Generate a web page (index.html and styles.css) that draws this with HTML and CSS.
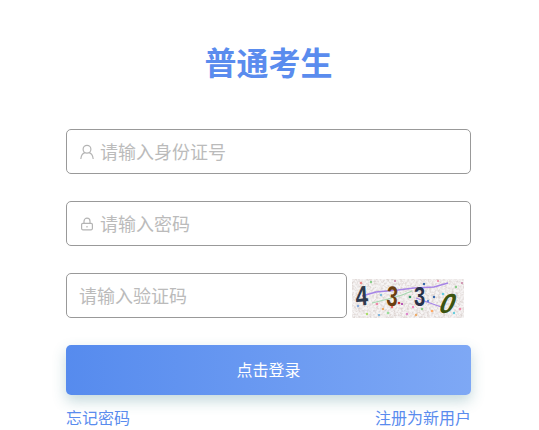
FILE: index.html
```html
<!DOCTYPE html>
<html lang="zh-CN">
<head>
    <meta charset="UTF-8">
    <meta name="viewport" content="width=device-width, initial-scale=1.0">
    <title>普通考生</title>
    <link rel="stylesheet" href="styles.css">
</head>
<body>

<form class="login-form">
    <h1 class="title">普通考生</h1>

    <div class="field">
        <svg class="field-icon" viewBox="0 0 16 16" width="16" height="16" fill="none" stroke="#b4b4b4" stroke-width="1.2">
            <circle cx="8" cy="5.2" r="3.9"/>
            <path d="M1.8 15c.4-3.6 2.6-5.9 4.2-6.3M14.2 15c-.4-3.6-2.6-5.9-4.2-6.3"/>
        </svg>
        <input class="input with-icon" type="text" placeholder="请输入身份证号">
    </div>

    <div class="field">
        <svg class="field-icon" viewBox="0 0 16 16" width="16" height="16" fill="none" stroke="#b4b4b4" stroke-width="1.2">
            <rect x="2.6" y="7.4" width="10.8" height="6.4" rx="1.2"/>
            <path d="M5 7.4V5.2a3 3 0 0 1 6 0v2.2M8 10v1.6"/>
        </svg>
        <input class="input with-icon" type="password" placeholder="请输入密码">
    </div>

    <div class="code-row">
        <input class="input code-input" type="text" placeholder="请输入验证码">
        <svg class="captcha" viewBox="0 0 112 39" width="112" height="39">
            <filter id="speckle" x="0" y="0" width="100%" height="100%">
                <feTurbulence type="fractalNoise" baseFrequency="0.45" numOctaves="2" seed="7"/>
                <feColorMatrix values="0 0 0 0 0.72  0 0 0 0 0.66  0 0 0 0 0.64  2.6 0 0 0 -1"/>
            </filter>
            <rect width="112" height="39" fill="#f6f4f4"/>
            <rect width="112" height="39" filter="url(#speckle)"/>
            <path d="M10 17 24 13 46 11 62 9 82 8 96 4" fill="none" stroke="#a583e6" stroke-width="1.4"/>
            <path d="M20 24 36 20 50 16 60 12" fill="none" stroke="#a8d8b0" stroke-width="1.2"/>
            <path d="M64 19 78 24 92 29" fill="none" stroke="#a583e6" stroke-width="1.2"/>
            <g>
                <circle cx="9" cy="4" r="1.3" fill="#e88"/><circle cx="19" cy="3" r="1.2" fill="#8c8"/>
                <circle cx="6" cy="27" r="1.2" fill="#8ad"/><circle cx="25" cy="25" r="1.3" fill="#e8a"/>
                <circle cx="29" cy="16" r="1.2" fill="#7bd"/><circle cx="31" cy="30" r="1.2" fill="#ea6"/>
                <circle cx="36" cy="34" r="1.3" fill="#9d9"/><circle cx="47" cy="24" r="1.3" fill="#c33"/>
                <circle cx="50" cy="25" r="1.1" fill="#a3a"/><circle cx="55" cy="35" r="1.3" fill="#d8c"/>
                <circle cx="58" cy="18" r="1.3" fill="#396"/><circle cx="61" cy="28" r="1.2" fill="#e8b"/>
                <circle cx="72" cy="5" r="1.2" fill="#36a"/><circle cx="76" cy="22" r="1.2" fill="#68c"/>
                <circle cx="80" cy="32" r="1.3" fill="#fa6"/><circle cx="82" cy="18" r="1.2" fill="#36a"/>
                <circle cx="86" cy="2" r="1.1" fill="#e8a"/><circle cx="91" cy="15" r="1.3" fill="#6cd"/>
                <circle cx="104" cy="8" r="1.2" fill="#8c8"/><circle cx="108" cy="30" r="1.3" fill="#e8a"/>
                <circle cx="102" cy="34" r="1.2" fill="#6cd"/><circle cx="110" cy="4" r="1.1" fill="#c8a"/>
                <circle cx="15" cy="35" r="1.2" fill="#ad6"/><circle cx="27" cy="36" r="1.1" fill="#6ad"/>
                <circle cx="64" cy="36" r="1.2" fill="#ea6"/><circle cx="43" cy="2" r="1.1" fill="#c8a"/>
                <circle cx="40" cy="28" r="1.2" fill="#e66"/><circle cx="70" cy="30" r="1.2" fill="#8c8"/>
            </g>
            <text class="digit" transform="translate(4 27) scale(.8 1) rotate(-4)" fill="#2f3a4d">4</text>
            <text class="digit" transform="translate(34 26) scale(.72 1) rotate(6)" fill="#6b3f10">3</text>
            <text class="digit" transform="translate(62 27) scale(.72 1)" fill="#28324a">3</text>
            <text class="digit" transform="translate(85 34) skewX(-22) scale(.95 .98)" fill="#3c5410">0</text>
        </svg>
    </div>

    <button class="submit" type="button">点击登录</button>

    <div class="links">
        <a href="#">忘记密码</a>
        <a href="#">注册为新用户</a>
    </div>
</form>

</body>
</html>
```

FILE: styles.css
```css
*{
    padding: 0;
    margin: 0;
    box-sizing: border-box;
}

body{
    background-color: #fff;
    font-family: "Noto Sans CJK SC", "Liberation Sans", sans-serif;
    overflow: hidden;
}

.login-form{
    width: 405px;
    margin: 0 0 0 66px;
    padding-top: 38px;
}

.title{
    font-size: 32px;
    font-weight: 700;
    line-height: 46px;
    text-align: center;
    color: #5a8cee;
    margin-bottom: 45px;
}

.field{
    position: relative;
    margin-bottom: 27px;
}

.field-icon{
    position: absolute;
    left: 13px;
    top: 15px;
}

.input{
    display: block;
    width: 100%;
    height: 45px;
    border: 1px solid #999;
    border-radius: 5px;
    padding: 0 12px 2px;
    font-family: inherit;
    font-size: 18px;
    color: #333;
    outline: none;
}

.input::placeholder{
    color: #bbb;
}

.with-icon{
    padding-left: 33px;
}

.code-row{
    display: flex;
    align-items: flex-end;
    gap: 5px;
    margin-bottom: 27px;
}

.code-input{
    width: 281px;
}

.captcha{
    display: block;
    flex: none;
}

.digit{
    font-family: "Liberation Sans", sans-serif;
    font-size: 28px;
    font-weight: 700;
}

.submit{
    display: block;
    width: 100%;
    height: 50px;
    border: none;
    border-radius: 5px;
    background: linear-gradient(90deg, #568bee, #7ea8f5);
    box-shadow: 0 6px 14px rgba(60, 130, 140, 0.3);
    color: #fff;
    font-family: inherit;
    font-size: 16px;
    padding-bottom: 2px;
}

.links{
    display: flex;
    justify-content: space-between;
    margin-top: 10px;
    font-size: 16px;
    line-height: 24px;
}

.links a{
    color: #5a8cee;
    text-decoration: none;
}
```
